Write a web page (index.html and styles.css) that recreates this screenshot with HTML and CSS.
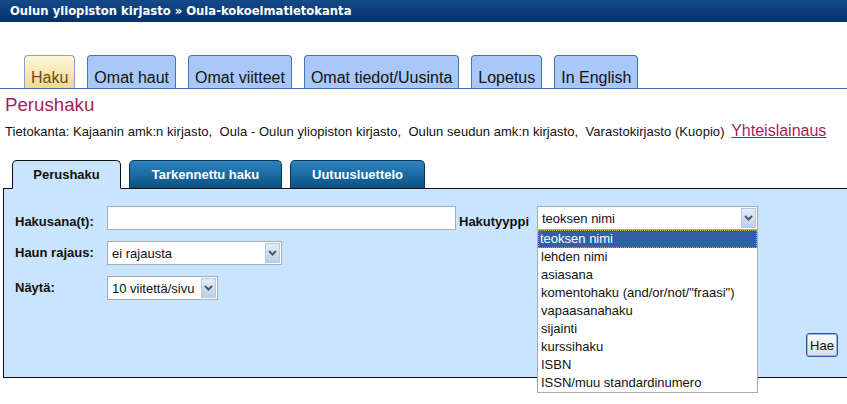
FILE: index.html
```
<!DOCTYPE html>
<html lang="fi">
<head>
<meta charset="utf-8">
<title>Oula-kokoelmatietokanta - Perushaku</title>
<link rel="stylesheet" href="styles.css">
</head>
<body>
<div class="topbar">Oulun yliopiston kirjasto » Oula-kokoelmatietokanta</div>
<nav class="maintabs">
  <a class="mtab active">Haku</a>
  <a class="mtab">Omat haut</a>
  <a class="mtab">Omat viitteet</a>
  <a class="mtab">Omat tiedot/Uusinta</a>
  <a class="mtab">Lopetus</a>
  <a class="mtab">In English</a>
</nav>
<h1 class="title">Perushaku</h1>
<p class="dbline">Tietokanta:&nbsp;Kajaanin amk:n kirjasto, &nbsp;Oula - Oulun yliopiston kirjasto, &nbsp;Oulun seudun amk:n kirjasto, &nbsp;Varastokirjasto (Kuopio) <a class="ill">Yhteislainaus</a></p>
<div class="search">
  <div class="stabs">
    <span class="stab sel t1">Perushaku</span>
    <span class="stab t2">Tarkennettu haku</span>
    <span class="stab t3">Uutuusluettelo</span>
  </div>
  <div class="panel">
    <div class="row r1">
      <label class="lbl lbl-low">Hakusana(t):</label>
      <input class="textbox" type="text">
      <label class="lbl2 lbl-low">Hakutyyppi</label>
      <div class="selwrap">
        <div class="select s-type"><span class="val">teoksen nimi</span><span class="arrow"><svg width="9" height="6" viewBox="0 0 9 6"><path d="M1 1 L4.5 4.5 L8 1" stroke="#4d5866" stroke-width="2" fill="none"/></svg></span></div>
        <ul class="dropdown">
          <li class="hl">teoksen nimi</li>
          <li>lehden nimi</li>
          <li>asiasana</li>
          <li>komentohaku (and/or/not/"fraasi")</li>
          <li>vapaasanahaku</li>
          <li>sijainti</li>
          <li>kurssihaku</li>
          <li>ISBN</li>
          <li>ISSN/muu standardinumero</li>
        </ul>
      </div>
    </div>
    <div class="row">
      <label class="lbl">Haun rajaus:</label>
      <div class="select s-limit"><span class="val">ei rajausta</span><span class="arrow"><svg width="9" height="6" viewBox="0 0 9 6"><path d="M1 1 L4.5 4.5 L8 1" stroke="#4d5866" stroke-width="2" fill="none"/></svg></span></div>
    </div>
    <div class="row">
      <label class="lbl">Näytä:</label>
      <div class="select s-show"><span class="val">10 viitettä/sivu</span><span class="arrow"><svg width="9" height="6" viewBox="0 0 9 6"><path d="M1 1 L4.5 4.5 L8 1" stroke="#4d5866" stroke-width="2" fill="none"/></svg></span></div>
    </div>
    <div class="actions"><button class="hae" type="button">Hae</button></div>
  </div>
</div>
</body>
</html>
```
FILE: styles.css
```
body {
  margin: 0;
  min-height: 404px;
  font-family: "Liberation Sans", Arial, sans-serif;
  color: #111;
  background: #fff;
}
.topbar {
  height: 22px;
  line-height: 22px;
  padding-left: 10px;
  background: linear-gradient(#154a88, #04306a);
  color: #fff;
  font-family: "DejaVu Sans", Verdana, sans-serif;
  font-weight: bold;
  font-size: 11.6px;
}
.maintabs {
  display: flex;
  gap: 12px;
  margin-top: 33px;
  padding-left: 24px;
  border-bottom: 1px solid #3d68b8;
}
.mtab {
  display: block;
  height: 33px;
  box-sizing: border-box;
  padding: 13px 6px 0;
  line-height: 18px;
  font-size: 16px;
  color: #111;
  background: #a9c8f7;
  border: 1px solid #4a70b6;
  border-bottom: none;
  border-radius: 4px 4px 0 0;
}
.mtab.active {
  background: linear-gradient(#fdf7dc, #f1d98e);
  color: #70461a;
  border-color: #8aa0c8;
}
.title {
  margin: 5px 0 0;
  padding-left: 5px;
  font-size: 18.7px;
  line-height: 22px;
  font-weight: normal;
  color: #a21f5e;
}
.dbline {
  margin: 6px 0 0;
  padding-left: 5px;
  font-size: 13px;
  line-height: 20px;
  letter-spacing: 0.05px;
  color: #111;
}
.ill {
  font-size: 16px;
  line-height: 16px;
  letter-spacing: 0;
  color: #a21f5e;
  text-decoration: underline;
  margin-left: 3px;
}
.search {
  margin: 18px 0 0 3px;
}
.stabs {
  display: flex;
  gap: 8px;
  padding-left: 9px;
  position: relative;
  z-index: 1;
  margin-bottom: -1px;
}
.stab {
  display: block;
  height: 29px;
  box-sizing: border-box;
  padding: 6px 0 0;
  text-align: center;
  line-height: 16px;
  font-size: 13px;
  font-weight: bold;
  color: #fff;
  background: linear-gradient(#2c84c2, #0a5282);
  border: 1px solid #0b3550;
  border-bottom-color: #111;
  border-radius: 5px 5px 0 0;
}
.t1 { width: 109px; }
.t2 { width: 153px; }
.t3 { width: 135px; }
.stab.sel {
  color: #111;
  background: #cae4fd;
  border-color: #111;
  border-bottom-color: #cae4fd;
}
.panel {
  background: #cae4fd;
  border: 1px solid #111;
  border-right: none;
  padding: 17px 9px 20px 11px;
}
.row {
  display: flex;
  align-items: center;
  height: 24px;
  margin-top: 11px;
}
.row.r1 { margin-top: 0; }
.lbl {
  width: 92px;
  flex: none;
  font-size: 13px;
  font-weight: bold;
  line-height: 16px;
}
.lbl-low { padding-top: 8px; }
.lbl2 {
  width: 71px;
  flex: none;
  margin-left: 3px;
  font-size: 13px;
  font-weight: bold;
  line-height: 16px;
  white-space: nowrap;
}
.textbox {
  width: 349px;
  height: 24px;
  box-sizing: border-box;
  margin: 0;
  border: 1px solid #a5acb3;
  background: #fff;
  padding: 0 4px;
  font: 13px "Liberation Sans", Arial, sans-serif;
}
.selwrap {
  position: relative;
  margin-left: 7px;
}
.select {
  display: flex;
  align-items: center;
  height: 24px;
  box-sizing: border-box;
  border: 1px solid #a5acb3;
  background: #fff;
  font-size: 13px;
}
.select .val {
  flex: 1;
  padding-left: 4px;
  white-space: nowrap;
  color: #111;
}
.arrow {
  display: flex;
  align-items: center;
  justify-content: center;
  width: 15px;
  height: 20px;
  margin-right: 1px;
  box-sizing: border-box;
  border: 1px solid #b7c8e2;
  background: linear-gradient(#e4ecf8, #bccfe9);
}
.s-type { width: 221px; }
.s-limit { width: 175px; }
.s-show { width: 111px; }
.dropdown {
  position: absolute;
  top: 23px;
  left: 0;
  width: 221px;
  box-sizing: border-box;
  margin: 0;
  padding: 0;
  list-style: none;
  background: #fff;
  border: 1px solid #a5acb3;
  z-index: 5;
  font-size: 13px;
}
.dropdown li {
  height: 18px;
  line-height: 18px;
  padding-left: 3px;
  white-space: nowrap;
  color: #111;
}
.dropdown li.hl {
  background: #3160a9;
  color: #fff;
  outline: 1px dotted #d89a3c;
  outline-offset: -1px;
  padding-left: 2px;
}
.actions {
  display: flex;
  justify-content: flex-end;
  margin-top: 33px;
}
.hae {
  height: 24px;
  width: 32px;
  padding: 0;
  border: 1px solid #2d57a8;
  border-radius: 3px;
  box-shadow: inset 0 0 0 1px #9cb3de;
  background: linear-gradient(#fbfcfd, #d8dfe9);
  font: 13px "Liberation Sans", Arial, sans-serif;
  color: #111;
}
```
